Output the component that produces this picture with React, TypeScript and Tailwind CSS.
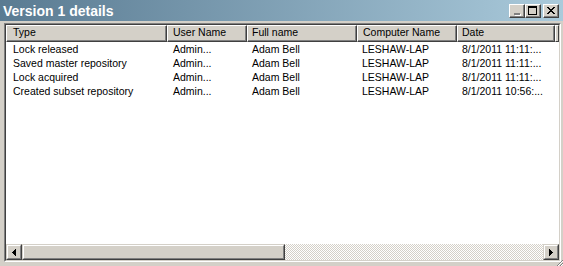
import React from 'react';

interface HistoryRow {
  type: string;
  user: string;
  fullName: string;
  computer: string;
  date: string;
}

const columns = [
  { label: 'Type', width: 'w-[161px]', pad: 'pl-[6px]' },
  { label: 'User Name', width: 'w-[80px]', pad: 'pl-[5px]' },
  { label: 'Full name', width: 'w-[110px]', pad: 'pl-[4px]' },
  { label: 'Computer Name', width: 'w-[100px]', pad: 'pl-[5px]' },
  { label: 'Date', width: 'w-[98px]', pad: 'pl-[4px]' },
];

const rows: HistoryRow[] = [
  { type: 'Lock released', user: 'Admin...', fullName: 'Adam Bell', computer: 'LESHAW-LAP', date: '8/1/2011 11:11:...' },
  { type: 'Saved master repository', user: 'Admin...', fullName: 'Adam Bell', computer: 'LESHAW-LAP', date: '8/1/2011 11:11:...' },
  { type: 'Lock acquired', user: 'Admin...', fullName: 'Adam Bell', computer: 'LESHAW-LAP', date: '8/1/2011 11:11:...' },
  { type: 'Created subset repository', user: 'Admin...', fullName: 'Adam Bell', computer: 'LESHAW-LAP', date: '8/1/2011 10:56:...' },
];

export default function App() {
  return (
    <div className="relative w-[563px] h-[266px] bg-[#d4d0c8] flex flex-col overflow-hidden font-['Liberation_Sans',Arial,sans-serif] text-[10.5px] text-black">
      {/* caption */}
      <div className="h-[21px] flex items-center justify-between pl-[3px] pr-[4px] bg-gradient-to-r from-[#5a7b92] to-[#aacadb]">
        <span className="text-white font-bold text-[14px] leading-none">Version 1 details</span>
        <div className="flex items-center">
          <CaptionButton>
            <div className="w-[6px] h-[2px] bg-[#808080] mt-[7px] shadow-[1px_1px_0_#ffffff]" />
          </CaptionButton>
          <CaptionButton>
            <div className="w-[9px] h-[9px] border border-black border-t-2" />
          </CaptionButton>
          <div className="w-[2px]" />
          <CaptionButton>
            <svg width="8" height="7" viewBox="0 0 8 7" shapeRendering="crispEdges">
              <path d="M0 0h2v1H0zM6 0h2v1H6zM1 1h2v1H1zM5 1h2v1H5zM2 2h4v1H2zM3 3h2v1H3zM2 4h4v1H2zM1 5h2v1H1zM5 5h2v1H5zM0 6h2v1H0zM6 6h2v1H6z" fill="#000" />
            </svg>
          </CaptionButton>
        </div>
      </div>

      {/* list view */}
      <div className="flex-1 flex flex-col pt-[2px] pl-[4px] pr-[2px] pb-[4px]">
        <div className="flex-1 flex flex-col border border-t-[#808080] border-l-[#808080] border-b-white border-r-white">
          <div className="flex-1 flex flex-col border border-t-[#404040] border-l-[#404040] border-b-[#d4d0c8] border-r-[#d4d0c8] bg-white">
            <div className="flex h-[17px] bg-[#d4d0c8]">
              {columns.map((c) => (
                <div key={c.label} className={`${c.width} h-full border border-t-white border-l-white border-b-[#404040] border-r-[#404040]`}>
                  <div className={`h-full flex items-center ${c.pad} border-b border-r border-[#808080] whitespace-nowrap`}>{c.label}</div>
                </div>
              ))}
              <div className="flex-1 h-full border border-t-white border-l-white border-b-[#404040] border-r-[#404040]" />
            </div>
            <div className="flex-1 flex flex-col">
              {rows.map((r, i) => (
                <div key={i} className="flex h-[14px] items-center whitespace-nowrap leading-none">
                  <div className="w-[161px] pl-[7px]">{r.type}</div>
                  <div className="w-[80px] pl-[6px]">{r.user}</div>
                  <div className="w-[110px] pl-[5px]">{r.fullName}</div>
                  <div className="w-[100px] pl-[5px]">{r.computer}</div>
                  <div className="w-[98px] pl-[5px]">{r.date}</div>
                </div>
              ))}
            </div>
            {/* horizontal scrollbar */}
            <div className="flex h-[16px]">
              <ScrollButton>
                <svg width="4" height="7" viewBox="0 0 4 7" shapeRendering="crispEdges">
                  <path d="M3 0h1v7H3zM2 1h1v5H2zM1 2h1v3H1zM0 3h1v1H0z" fill="#000" />
                </svg>
              </ScrollButton>
              <div className="w-[263px] h-full bg-[#d4d0c8] border border-t-[#d4d0c8] border-l-[#d4d0c8] border-b-[#404040] border-r-[#404040]">
                <div className="h-full border border-t-white border-l-white border-b-[#808080] border-r-[#808080]" />
              </div>
              <div className="flex-1 h-full bg-[repeating-conic-gradient(#d4d0c8_0_25%,#ffffff_0_50%)] bg-[length:2px_2px]" />
              <ScrollButton>
                <svg width="4" height="7" viewBox="0 0 4 7" shapeRendering="crispEdges">
                  <path d="M0 0h1v7H0zM1 1h1v5H1zM2 2h1v3H2zM3 3h1v1H3z" fill="#000" />
                </svg>
              </ScrollButton>
            </div>
          </div>
        </div>
      </div>

      {/* size grip */}
      <svg className="absolute right-0 bottom-0" width="12" height="7" viewBox="0 0 12 7" shapeRendering="crispEdges">
        <path d="M6 7l6-6M9 7l3-3" stroke="#808080" strokeWidth="1" />
        <path d="M7 7l5-5M10 7l2-2" stroke="#ffffff" strokeWidth="1" />
      </svg>
    </div>
  );
}

function CaptionButton({ children }: { children: React.ReactNode }) {
  return (
    <div className="w-[16px] h-[14px] bg-[#d4d0c8] border border-t-white border-l-white border-b-[#404040] border-r-[#404040]">
      <div className="w-full h-full flex items-center justify-center border-b border-r border-[#808080]">{children}</div>
    </div>
  );
}

function ScrollButton({ children }: { children: React.ReactNode }) {
  return (
    <div className="w-[16px] h-[16px] bg-[#d4d0c8] border border-t-[#d4d0c8] border-l-[#d4d0c8] border-b-[#404040] border-r-[#404040]">
      <div className="w-full h-full flex items-center justify-center border border-t-white border-l-white border-b-[#808080] border-r-[#808080]">{children}</div>
    </div>
  );
}
